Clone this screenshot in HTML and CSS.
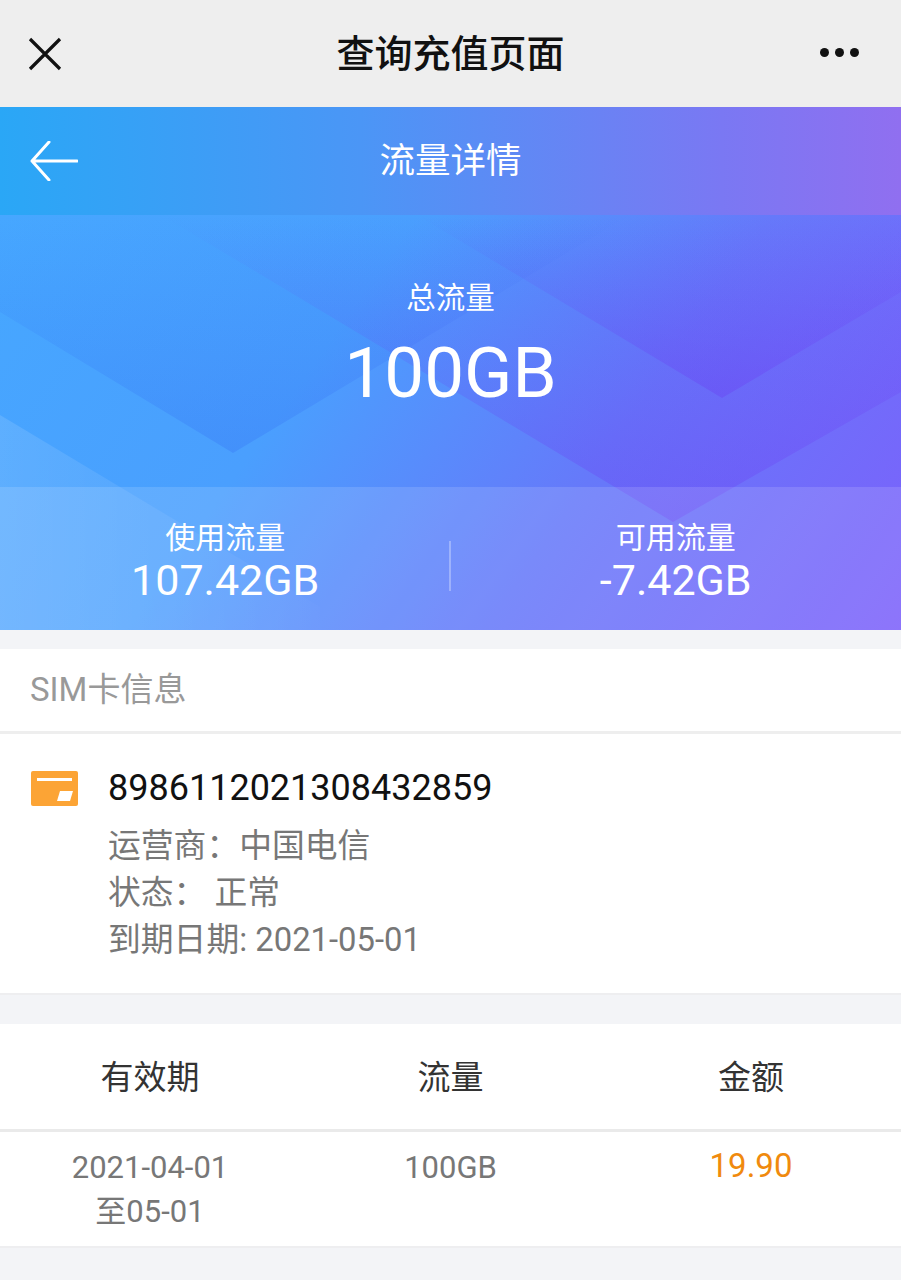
FILE: index.html
```html
<!DOCTYPE html>
<html lang="zh-CN">
<head>
  <meta charset="UTF-8" />
  <meta name="viewport" content="width=device-width, initial-scale=1" />
  <title>查询充值页面</title>
  <link rel="stylesheet" href="styles.css">
</head>
<body>
  <header class="wx-bar">
    <svg class="wx-close" width="34" height="34" viewBox="0 0 34 34"><path d="M2 2 L32 32 M32 2 L2 32" fill="none" stroke="#111" stroke-width="3.2"/></svg>
    <div class="wx-title">查询充值页面</div>
    <div class="wx-more"><i></i><i></i><i></i></div>
  </header>

  <div class="nav-bar">
    <svg class="nav-back" width="48" height="40" viewBox="0 0 48 40"><path d="M19 1 L2 20 L19 39 M2 20 L47 20" fill="none" stroke="#fff" stroke-width="3" stroke-linecap="round" stroke-linejoin="round"/></svg>
    <div class="nav-title">流量详情</div>
  </div>

  <section class="hero">
    <svg class="hero-bg" width="901" height="415" viewBox="0 0 901 415">
      <defs>
        <linearGradient id="fadeBlue" x1="0" y1="0" x2="0" y2="1">
          <stop offset="0" stop-color="#2a5cf0" stop-opacity="0"/>
          <stop offset="1" stop-color="#2a5cf0" stop-opacity="0.22"/>
        </linearGradient>
        <linearGradient id="fadeViolet" x1="0" y1="0" x2="0" y2="1">
          <stop offset="0" stop-color="#6a30f0" stop-opacity="0"/>
          <stop offset="1" stop-color="#6a30f0" stop-opacity="0.28"/>
        </linearGradient>
        <linearGradient id="fadeWhite" x1="0" y1="0" x2="1" y2="0">
          <stop offset="0" stop-color="#fff" stop-opacity="0.12"/>
          <stop offset="1" stop-color="#fff" stop-opacity="0.01"/>
        </linearGradient>
      </defs>
      <polygon points="0,97 233,238 630,0 0,0" fill="url(#fadeBlue)"/>
      <polygon points="233,43 673,307 901,177 901,0 161,0" fill="url(#fadeViolet)"/>
      <polygon points="417,0 722,183 901,77 901,0" fill="url(#fadeViolet)"/>
      <polygon points="0,200 320,392 320,415 0,415" fill="url(#fadeWhite)"/>
    </svg>
    <div class="hero-total">
      <div class="total-label">总流量</div>
      <div class="total-value">100GB</div>
    </div>
    <div class="hero-stats">
      <div class="stat">
        <div class="stat-label">使用流量</div>
        <div class="stat-value">107.42GB</div>
      </div>
      <div class="stat-line"></div>
      <div class="stat">
        <div class="stat-label">可用流量</div>
        <div class="stat-value">-7.42GB</div>
      </div>
    </div>
  </section>

  <section class="card sim-card">
    <div class="card-head">SIM卡信息</div>
    <div class="sim-body">
      <svg class="sim-icon" width="47" height="35" viewBox="0 0 47 35">
        <rect width="47" height="35" rx="2" fill="#fca435"/>
        <rect x="6" y="7" width="35" height="3" fill="#fff"/>
        <polygon points="29,20 42,20 39,30 26,30" fill="#fff"/>
      </svg>
      <div class="sim-info">
        <div class="sim-number">8986112021308432859</div>
        <div class="sim-line">运营商：中国电信</div>
        <div class="sim-line">状态： 正常</div>
        <div class="sim-line">到期日期: 2021-05-01</div>
      </div>
    </div>
  </section>

  <section class="card plan">
    <div class="plan-head">
      <div>有效期</div>
      <div>流量</div>
      <div>金额</div>
    </div>
    <div class="plan-row">
      <div>2021-04-01<br>至05-01</div>
      <div class="plan-flow">100GB</div>
      <div class="plan-price">19.90</div>
    </div>
  </section>
</body>
</html>
```

FILE: styles.css
```css
html, body {
  margin: 0;
  padding: 0;
  background-color: #f3f4f7;
  font-family: Roboto, "Noto Sans CJK SC", sans-serif;
}

body {
  width: 901px;
  height: 1280px;
  overflow: hidden;
}

.wx-bar {
  height: 107px;
  background: #eeeeee;
  display: flex;
  align-items: center;
  justify-content: space-between;
  padding: 0 42px 0 28px;
  box-sizing: border-box;
  position: relative;
}

.wx-title {
  position: absolute;
  left: 0;
  right: 0;
  padding-bottom: 6px;
  text-align: center;
  font-size: 38px;
  font-weight: 500;
  color: #111;
}

.wx-more {
  display: flex;
  gap: 6px;
  margin-bottom: 2px;
}

.wx-more i {
  width: 9px;
  height: 9px;
  border-radius: 50%;
  background: #111;
}

.nav-bar {
  height: 108px;
  background: linear-gradient(90deg, #2aa7f6 0%, #4b96f6 40%, #7a78f3 80%, #906ff0 100%);
  display: flex;
  align-items: center;
  padding-left: 30px;
  position: relative;
}

.nav-title {
  position: absolute;
  left: 0;
  right: 0;
  padding-bottom: 8px;
  text-align: center;
  font-size: 35.5px;
  color: #fff;
}

.hero {
  height: 415px;
  position: relative;
  overflow: hidden;
  background: linear-gradient(125deg, #46a7ff 0%, #4a9ffe 35%, #6679fa 65%, #7c60fb 100%);
  color: #fff;
}

.hero-bg {
  position: absolute;
  left: 0;
  top: 0;
}

.hero-total {
  position: relative;
  height: 272px;
  text-align: center;
  padding-top: 62px;
  box-sizing: border-box;
}

.total-label {
  font-size: 29.5px;
  line-height: 42px;
}

.total-value {
  font-size: 71px;
  line-height: 84px;
  margin-top: 12px;
}

.hero-stats {
  position: relative;
  height: 143px;
  background: rgba(255, 255, 255, 0.13);
  display: flex;
  align-items: flex-start;
  padding-top: 31px;
  box-sizing: border-box;
}

.stat {
  flex: 1;
  text-align: center;
}

.stat-label {
  font-size: 30px;
  line-height: 40px;
}

.stat-value {
  font-size: 43px;
  line-height: 44px;
}

.stat-line {
  width: 2px;
  height: 50px;
  margin-top: 23px;
  margin-left: -2px;
  background: rgba(255, 255, 255, 0.3);
}

.card {
  background: #fff;
  border-bottom: 2px solid #eeeef0;
}

.sim-card {
  margin-top: 19px;
}

.card-head {
  height: 85px;
  line-height: 81px;
  padding-left: 30px;
  font-size: 33px;
  color: #999;
  border-bottom: 3px solid #eeeeee;
  box-sizing: border-box;
}

.sim-body {
  display: flex;
  padding: 29px 0 29px 31px;
}

.sim-icon {
  margin-top: 8px;
  margin-right: 30px;
}

.sim-number {
  font-size: 36px;
  line-height: 50px;
  color: #111;
}

.sim-line {
  font-size: 32.8px;
  line-height: 47px;
  color: #777;
}

.sim-number + .sim-line {
  margin-top: 10px;
}

.plan {
  margin-top: 29px;
}

.plan-head,
.plan-row {
  display: grid;
  grid-template-columns: 300px 301px 300px;
  text-align: center;
}

.plan-head {
  height: 108px;
  line-height: 108px;
  font-size: 33px;
  color: #333;
  border-bottom: 3px solid #eaeaea;
  box-sizing: border-box;
}

.plan-row {
  height: 114px;
  padding-top: 14px;
  box-sizing: border-box;
  font-size: 31px;
  line-height: 44px;
  color: #777;
}

.plan-flow {
  font-size: 31px;
}

.plan-price {
  font-size: 33px;
  line-height: 40px;
  color: #f08a0e;
}
```
